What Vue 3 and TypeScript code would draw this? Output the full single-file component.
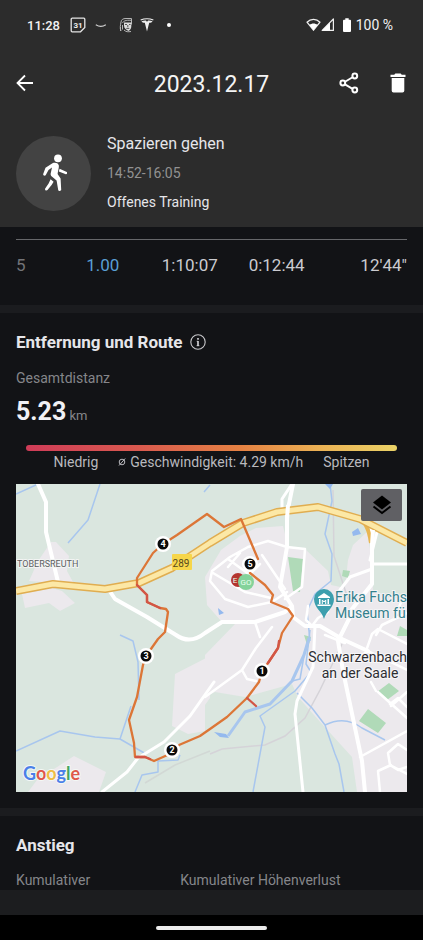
<script setup lang="ts">
interface Marker {
  label: string
  x: number
  y: number
}

const lap: string[] = ['5', '1.00', '1:10:07', '0:12:44', '12\'44"']

const markers: Marker[] = [
  { label: '1', x: 262, y: 671 },
  { label: '2', x: 172, y: 750 },
  { label: '3', x: 146, y: 656 },
  { label: '4', x: 163, y: 544 },
  { label: '5', x: 250, y: 564 },
]

const ascent: string[] = ['Kumulativer', 'Kumulativer Höhenverlust']
</script>

<template>
  <div class="screen">
    <header class="top">
      <div class="status">
        <span class="clock">11:28</span>
        <svg class="s-icon" width="16" height="16" viewBox="0 0 16 16">
          <path d="M2.2 1.2h11.6a1 1 0 0 1 1 1v8.3l-4.3 4.3H2.2a1 1 0 0 1-1-1V2.2a1 1 0 0 1 1-1z" fill="none" stroke="#e4e4e4" stroke-width="1.3" />
          <text x="8" y="11" text-anchor="middle" class="cal-text">31</text>
        </svg>
        <svg class="s-smile" width="12" height="16" viewBox="0 0 12 16">
          <path d="M.8 7.800c3 1.900 7 2 10-.1" fill="none" stroke="#d0d0d0" stroke-width="1.200" />
        </svg>
        <svg class="s-face" width="14" height="16" viewBox="0 0 14 16">
          <path d="M2 14C.6 11 1.600 8 2 5c.3-2.500 2-3.500 5-3.500h5.500v6M3.500 6c1-2 3-3 8.500-2.700M3.500 8v4.500M5 13c2 2 4 2 7 1.500M1.500 10v4" fill="none" stroke="#b5b5b5" stroke-width="1" />
          <path d="M5 5.500h7.300v4c0 2-1.300 3.500-2.800 4.500C7 12.500 5 11.500 5 8.500z" fill="#dcdcdc" />
          <path d="M6 7.500h2M10 7.500h1.500M8.800 8v2.200M7.300 11.400h3" stroke="#444" stroke-width=".9" />
        </svg>
        <svg class="s-tesla" width="14" height="16" viewBox="0 0 14 16">
          <path d="M.4 2.500C4.500.7 9.500.7 13.600 2.500l-.5 1C9 1.900 5 1.900.9 3.500zM1.500 4.200C3 3.500 4.500 3.300 5.800 3.400L7 4.700l1.200-1.300c1.300-.1 2.800.1 4.300.8-.6 1.300-1.700 1.500-3.300 1.500L7 14.600 4.800 5.700c-1.600 0-2.700-.2-3.300-1.500z" fill="#eee" />
        </svg>
        <span class="s-dot"></span>
        <span class="grow"></span>
        <svg width="15" height="14" viewBox="0 0 15 14">
          <path d="M1 4.200C4.700.4 10.300.4 14 4.200L7.500 12.200z" fill="none" stroke="#eee" stroke-width="1.300" stroke-linejoin="round" />
          <path d="M3.500 7c2.200-2 5.800-2 8 0l-4 5.200z" fill="#fff" />
        </svg>
        <svg width="14" height="14" viewBox="0 0 14 14">
          <path d="M12.400 1v11.400H1.200z" fill="none" stroke="#eee" stroke-width="1.200" stroke-linejoin="round" />
          <path d="M9 4.500v8H1z" fill="#fff" />
        </svg>
        <svg class="s-batt" width="8" height="14" viewBox="0 0 8 14">
          <path d="M2.300.3h3.400v1.400H7a1 1 0 0 1 1 1V13a1 1 0 0 1-1 1H1a1 1 0 0 1-1-1V2.700a1 1 0 0 1 1-1h1.300z" fill="#fff" />
        </svg>
        <span class="percent">100 %</span>
      </div>

      <nav class="bar">
        <button type="button" class="icon-btn" aria-label="Zurück">
          <svg width="18" height="18" viewBox="0 0 18 18">
            <path d="M17 9H2M9 1.500 1.500 9 9 16.500" fill="none" stroke="#fff" stroke-width="1.800" />
          </svg>
        </button>
        <h1>2023.12.17</h1>
        <button type="button" class="icon-btn" aria-label="Teilen">
          <svg width="20" height="22" viewBox="0 0 20 22">
            <path d="M14 5 6 9.700M6 12.400l8 4.700" stroke="#fff" stroke-width="1.900" />
            <g fill="none" stroke="#fff" stroke-width="2">
              <circle cx="15.800" cy="4" r="2.400" />
              <circle cx="3.800" cy="11" r="2.400" />
              <circle cx="15.800" cy="18" r="2.400" />
            </g>
          </svg>
        </button>
        <button type="button" class="icon-btn" aria-label="Löschen">
          <svg width="16" height="20" viewBox="0 0 16 20">
            <path d="M.5 1.700h3.700L5.400.4h5.200l1.200 1.300h3.700v2.200H.5zM1.700 5h12.600v12.800a1.800 1.800 0 0 1-1.800 1.800h-9a1.800 1.800 0 0 1-1.800-1.800z" fill="#fff" />
          </svg>
        </button>
      </nav>

      <div class="activity">
        <div class="avatar">
          <svg width="26" height="38" viewBox="0 0 26 38">
            <circle cx="17" cy="4.300" r="3.900" fill="#fff" />
            <path d="M11.500 9.200c2.600-1 5.600-.2 6.300 2 .5 2-.9 5.500-1.200 8.800l3 4.600.6 11.200c0 1.400-2.700 1.500-3 .1l-1.600-9.300-5.400-4.700c-.8-1-.6-2.300-.3-3.400l1.100-4.900-3.500 2.300-2.700 5.100c-.7 1.400-3 .5-2.600-1l2.300-6.200z" fill="#fff" />
            <path d="M18.600 14.800l7.200 3.300c1 .7.200 2.400-1 2.100l-7-2.600zM9.600 25.200l3 2.600-2 3.200-4.100 5c-1.300 1.200-3-.1-2.300-1.500l3.400-5z" fill="#fff" />
          </svg>
        </div>
        <div class="activity-text">
          <h2>Spazieren gehen</h2>
          <p class="time">14:52-16:05</p>
          <p class="mode">Offenes Training</p>
        </div>
      </div>
    </header>

    <main>
      <section class="laps">
        <table>
          <tbody>
            <tr>
              <td v-for="value in lap" :key="value">{{ value }}</td>
            </tr>
          </tbody>
        </table>
      </section>

      <section class="route">
        <div class="heading">
          <h3>Entfernung und Route</h3>
          <button type="button" class="info" aria-label="Info">
            <svg width="16" height="16" viewBox="0 0 16 16">
              <circle cx="8" cy="8" r="7.200" fill="none" stroke="#c8c8cb" stroke-width="1.100" />
              <path d="M8 4v1.700M8 7v5" fill="none" stroke="#d8d8db" stroke-width="1.600" />
              <path d="M6.700 7.300H8M6.600 11.700h2.800" fill="none" stroke="#d8d8db" stroke-width=".8" />
            </svg>
          </button>
        </div>
        <p class="caption">Gesamtdistanz</p>
        <p class="distance"><strong>5.23</strong> <span>km</span></p>
        <div class="speed-bar"></div>
        <div class="legend">
          <span>Niedrig</span>
          <span class="speed">
            <svg width="8" height="10" viewBox="0 0 8 10" role="img" aria-label="Durchschnitt">
              <path d="M1 8.500L7.200 1.500" stroke="#b9b9be" stroke-width="1" />
              <circle cx="4" cy="5" r="2.800" fill="none" stroke="#b9b9be" stroke-width="1" />
            </svg>
            Geschwindigkeit: 4.29 km/h
          </span>
          <span>Spitzen</span>
        </div>

        <div class="map">
          <svg class="map-canvas" viewBox="16 484 391 308" preserveAspectRatio="xMidYMid slice">
            <rect x="16" y="484" width="391" height="308" fill="#dae6df" />
            <!-- built-up areas -->
            <g fill="#ece9ed">
              <path d="M51 542L56 542 69 556 67 571 73 582 55 583 29 581 38 561zM22 594L52 588 62 591 75 603 60 611 49 603 25 608z" />
              <path d="M205 577L221 550 240 536 256 528 283 526 288 546 305 549 328 571 331 585 345 588 348 560 353 545 367 532 372 560 373 590 390 598 407 598V792H357L352 757 322 724 298 697 292 684 245 697 215 692 205 697V655L235 624 222 622 207 605z" />
              <path d="M175 674L210 656V698L205 705V731L188 734 172 726z" />
              <path d="M28 792L37 780 74 756 106 772 99 792z" />
            </g>
            <!-- parks -->
            <g fill="#b0dab8">
              <path d="M288 557l15 2-3 33-7-1zM389 683l10 8-12 9-10-8zM368 709l18 14-8 10-19-12zM343 570l7 1-2 7-6-2zM304 635l7 2-3 11zM400 626l7 4v6h-10z" />
            </g>
            <!-- railway -->
            <path d="M210 754L222 749 265 745 285 736 305 718 320 690 342 644M333 490L334 556 348 599" fill="none" stroke="#d5d3d8" stroke-width="1.500" />
            <path d="M145 783L175 765 210 751" fill="none" stroke="#d2d8d5" stroke-width="1.500" />
            <!-- streams -->
            <g fill="none" stroke="#a8c6ee" stroke-width="1.500" stroke-linejoin="round">
              <path d="M16 494L38 484M100 484L88 520 68 543M120 635L133 641 138 662 139 700M131 706L120 739M16 751L60 731 95 737 120 739 146 754M204 492L210 485" />
              <path d="M135 792L142 775 158 772V761L178 760 180 755M330 484L332 501 325 534 332 554 331 581 315 594 307 611 310 641" />
              <path d="M310 630L306 664 311 672 295 691 260 716 265 727 253 792M292 681L300 679 305 650M297 693L312 708 325 725 335 754 339 764 344 792M325 725Q345 715 362 728L385 740" />
              <path d="M228 736L245 712 270 704 292 681 304 655 309 638" stroke-width="3" />
            </g>
            <path d="M214 732l12 2 3 4-9-1zM352 532l6-4 3 6-8 2zM218 608l6 5-5 2zM325 484h8l-3 5z" fill="#94b9ee" />
            <!-- streets -->
            <g fill="none" stroke="#fff" stroke-linejoin="round" stroke-linecap="round">
              <path stroke-width="4" d="M38 484L46 502V532L58 582M109 590L115 599 147 617 176 635Q190 645 205 633L222 622H255L285 612 292 606M293 484L287 514V547L280 587 292 606 293 617 305 626H320L342 639 368 651M372 524V584L352 609 350 617 338 641 343 671 362 761 365 792" />
              <path stroke-width="3" d="M102 792L127 772 138 758 164 742 190 716 214 682M292 484L282 499V509L287 514M315 626L313 667 297 701 295 714 303 792M378 528L370 560M372 564H407M372 569L350 577 340 590" />
              <path stroke-width="2.500" d="M287 547L268 541 248 547 230 557 212 571 210 581 225 599 248 607 272 602 287 592M287 547L305 549 302 587 285 599M228 559L250 575M262 555L285 589M213 573L245 592 271 598M260 564L246 578M240 553L228 567" />
              <path stroke-width="2.500" d="M255 622L260 637M272 627L256 648 242 670 205 697M242 670L247 679 256 681M328 612L318 618 312 626 306 620 308 606M368 651L362 655M366 651L372 634 378 629 407 644M376 635L382 625 407 613M394 619L402 600M345 643L325 635M368 651L407 670M376 691L371 682M378 692L407 718M390 704L398 698 407 707M391 706L407 692M360 757L407 731" />
              <path stroke-width="2.500" d="M407 750L398 744 388 753 390 765 398 770 407 767M380 792L378 771 391 765M390 765L407 774" />
            </g>
            <!-- federal road -->
            <g fill="none" stroke-linejoin="round">
              <path d="M358 518Q368 522 371 543" stroke="#e9b653" stroke-width="4" />
              <path d="M16 591L53 584 105 589 139 583 172 568 210 543 243 523 277 512 318 507 360 519 407 543" stroke="#e0ad50" stroke-width="8" />
              <path d="M16 591L53 584 105 589 139 583 172 568 210 543 243 523 277 512 318 507 360 519 407 543" stroke="#fce8a6" stroke-width="5" />
            </g>
            <path stroke="#fff" stroke-width="4" d="M287 519L288 505M373 530L372 545" />
            <rect x="172" y="554" width="20" height="16" rx="1" fill="#f6d64a" />
            <text x="181" y="567" text-anchor="middle" class="m-road">289</text>

            <text x="17" y="567" class="m-village">TOBERSREUTH</text>
            <text x="335" y="602" class="m-poi">Erika Fuchs</text>
            <text x="335" y="618" class="m-poi">Museum fü</text>
            <text x="407" y="662" text-anchor="end" class="m-town">Schwarzenbach</text>
            <text x="360" y="678" text-anchor="middle" class="m-town">an der Saale</text>

            <path d="M324 619c-2-8-10-11-10-20a10 10 0 0 1 20 0c0 9-8 12-10 20z" fill="#3d9fae" />
            <path d="M318 597l6-4 6 4v1h-12zM319 599h1.500v5H319zM327.500 599h1.500v5h-1.500zM317.500 604.500h13v1.500h-13z" fill="#fff" />
            <path d="M322.300 604v-4l1.700 2 1.700-2v4" fill="none" stroke="#fff" stroke-width="1" />

            <!-- recorded track -->
            <g fill="none" stroke-width="2.300" stroke-linejoin="round" stroke-linecap="round">
              <path stroke="#dc7637" d="M250 573L265 585 273 595 271 602 288 609 293 616 282 633 278 648 268 663 262 671 259 682 247 698 227 717 210 729 200 736 179 745 172 753 154 761 145 757 135 757 134 743 129 720 137 697 143 665 146 656 158 639 165 632 168 612 166 609 160 608 147 602V595L137 585V578L153 553 163 544 177 535 207 514 224 527 241 519 258 559" />
              <path stroke="#d25546" d="M137 585L147 595V602L160 608M279 641L278 648 268 663M247 698L256 706M136 757H145L150 759" />
            </g>

            <circle cx="238" cy="580" r="7" fill="#b4352f" />
            <text x="235" y="583" text-anchor="middle" class="m-go">E</text>
            <circle cx="246" cy="582" r="8" fill="#84d39b" />
            <text x="246" y="585" text-anchor="middle" class="m-go">GO</text>

            <g v-for="m in markers" :key="m.label">
              <circle :cx="m.x" :cy="m.y" r="8" fill="#fff" />
              <circle :cx="m.x" :cy="m.y" r="5.500" fill="#0b0b0b" />
              <text :x="m.x" :y="m.y + 3" text-anchor="middle" class="m-num">{{ m.label }}</text>
            </g>

            <text x="23" y="780" class="m-logo"><tspan fill="#4b7fe8">G</tspan><tspan fill="#e0574b">o</tspan><tspan fill="#efbd45">o</tspan><tspan fill="#4b7fe8">g</tspan><tspan fill="#46a662">l</tspan><tspan fill="#e0574b">e</tspan></text>
          </svg>
          <button type="button" class="layers" aria-label="Kartenebenen">
            <svg width="20" height="20" viewBox="0 0 20 20">
              <path d="M10 .5l9 7-9 7-9-7z" fill="#000" />
              <path d="M1.500 11.500L10 18l8.500-6.500" fill="none" stroke="#000" stroke-width="2" />
            </svg>
          </button>
        </div>
      </section>

      <section class="ascent">
        <h3>Anstieg</h3>
        <div class="pair">
          <p v-for="name in ascent" :key="name">{{ name }}</p>
        </div>
      </section>
    </main>

    <footer>
      <div class="toolbar"></div>
      <div class="gesture"><span></span></div>
    </footer>
  </div>
</template>

<style>
body {
  margin: 0;
  background: #000;
}
</style>

<style scoped>
.screen {
  min-height: 100vh;
  display: flex;
  flex-direction: column;
  background: #121316;
  color: #e6e6ea;
  font-family: Roboto, "Liberation Sans", sans-serif;
}
h1, h2, h3, p {
  margin: 0;
}
button {
  padding: 0;
  border: 0;
  background: none;
  display: flex;
  align-items: center;
  justify-content: center;
}
svg {
  display: block;
  flex: none;
}
.top {
  background: #2c2c2c;
  padding-bottom: 15px;
}
.status {
  display: flex;
  align-items: center;
  height: 50px;
  padding: 0 30px 0 27px;
  color: #f2f2f2;
  font-size: 14px;
}
.clock {
  width: 43px;
  font-size: 13px;
  font-weight: 500;
}
.cal-text {
  font-size: 8px;
  font-weight: 700;
  fill: #eee;
}
.s-smile {
  margin-left: 9px;
}
.s-face {
  margin-left: 12px;
}
.s-tesla {
  margin-left: 7px;
}
.s-dot {
  width: 4px;
  height: 4px;
  margin-left: 13px;
  border-radius: 50%;
  background: #fff;
}
.grow {
  flex: 1;
}
.s-batt {
  margin: 0 5px 0 8px;
}
.bar {
  display: flex;
  align-items: center;
  height: 66px;
  padding: 0 9px;
}
.icon-btn {
  width: 32px;
  height: 32px;
}
.icon-btn + .icon-btn {
  margin-left: 17px;
}
h1 {
  flex: 1;
  padding: 3px 0 0 49px;
  text-align: center;
  font-size: 23px;
  line-height: 32px;
  font-weight: 400;
  color: #f4f4f4;
}
.activity {
  display: flex;
  align-items: center;
  gap: 16px;
  padding: 18px 16px 0;
}
.avatar {
  width: 75px;
  height: 75px;
  border-radius: 50%;
  background: #434343;
  display: flex;
  align-items: center;
  justify-content: center;
}
.activity-text {
  display: grid;
  gap: 9px;
}
h2 {
  font-size: 16px;
  line-height: 20px;
  font-weight: 400;
}
.time,
.mode {
  font-size: 14px;
  line-height: 20px;
}
.time {
  color: #929292;
}
.laps {
  padding: 12px 16px 26px;
}
table {
  width: 100%;
  table-layout: fixed;
  border-collapse: collapse;
  border-top: 1px solid #66676a;
  font-size: 17px;
  line-height: 20px;
}
td {
  padding: 15px 0 4px;
  width: 22%;
  text-align: center;
  color: #cbcbd0;
}
td:first-child {
  width: 11%;
  text-align: left;
  color: #737478;
}
td:nth-child(2) {
  color: #5a9fd4;
}
td:last-child {
  text-align: right;
}
.route {
  border-top: 8px solid #1b1c1f;
  border-bottom: 8px solid #1b1c1f;
  padding: 17px 16px 16px;
}
.heading {
  display: flex;
  align-items: center;
  gap: 8px;
}
h3 {
  font-size: 17px;
  line-height: 24px;
  font-weight: 700;
}
.caption {
  padding-top: 14px;
  font-size: 14px;
  line-height: 20px;
  color: #85868a;
}
.distance {
  padding-top: 8px;
  line-height: 32px;
  font-size: 13px;
  color: #85868a;
}
.distance strong {
  font-size: 25px;
  color: #f1f1f5;
}
.speed-bar {
  height: 6px;
  margin: 13px 10px 0;
  border-radius: 3px;
  background: linear-gradient(90deg, #cf3c58, #d9594f 30%, #e58243 58%, #ebb355 80%, #ead267);
}
.legend {
  display: flex;
  justify-content: center;
  gap: 20px;
  padding: 1px 0 12px;
  font-size: 14px;
  line-height: 20px;
  white-space: nowrap;
  color: #b9b9be;
}
.speed {
  display: flex;
  align-items: center;
  gap: 4px;
}
.map {
  position: relative;
}
.map-canvas {
  width: 100%;
  height: auto;
}
.layers {
  position: absolute;
  top: 5px;
  right: 5px;
  width: 41px;
  height: 32px;
  border-radius: 2px;
  background: #606064;
}
.m-road {
  font-size: 10px;
  fill: #55491f;
}
.m-village {
  font-size: 9px;
  fill: #5d6062;
  stroke: #f2f4f3;
  stroke-width: 2px;
  paint-order: stroke;
}
.m-poi {
  font-size: 14px;
  fill: #34808c;
  stroke: #f3f3f5;
  stroke-width: 2px;
  paint-order: stroke;
}
.m-town {
  font-size: 14px;
  fill: #2e2e32;
  stroke: #f7f6f8;
  stroke-width: 2px;
  paint-order: stroke;
}
.m-go {
  font-size: 8px;
  fill: #e9fff0;
}
.m-num {
  font-size: 9px;
  font-weight: 700;
  fill: #fff;
}
.m-logo {
  font-family: Lato, "Liberation Sans", sans-serif;
  font-size: 18px;
  font-weight: 700;
  stroke: #f4f8f6;
  stroke-width: 2px;
  paint-order: stroke;
}
.ascent {
  padding: 17px 16px 0;
}
.pair {
  display: grid;
  grid-template-columns: 42% 58%;
  padding-top: 13px;
  font-size: 14px;
  line-height: 20px;
  color: #85868a;
}
footer {
  margin-top: auto;
}
.toolbar {
  height: 25px;
  background: #1c1d1f;
}
.gesture {
  display: flex;
  justify-content: center;
  padding: 11px 0 10px;
  background: #000;
}
.gesture span {
  width: 111px;
  height: 4px;
  border-radius: 2px;
  background: #ececec;
}
</style>
